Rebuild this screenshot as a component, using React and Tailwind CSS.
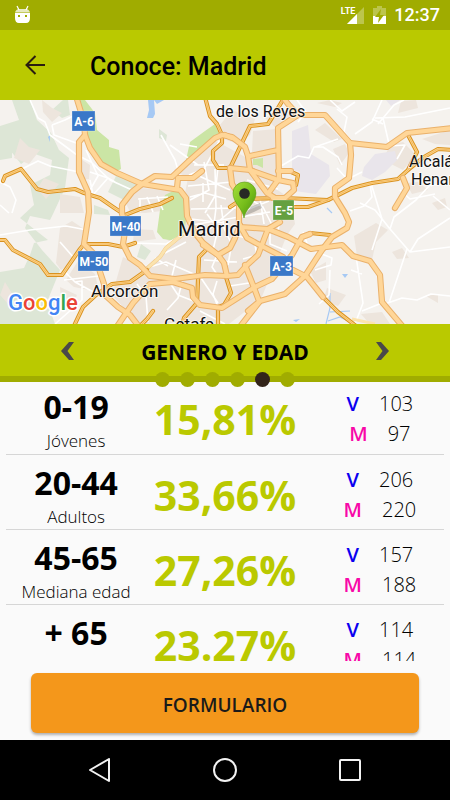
import React from "react";

const groups = [
  { range: "0-19", label: "Jóvenes", share: "15,81%", men: "103", women: "97" },
  { range: "20-44", label: "Adultos", share: "33,66%", men: "206", women: "220" },
  { range: "45-65", label: "Mediana edad", share: "27,26%", men: "157", women: "188" },
  { range: "+ 65", label: "Mayores", share: "23.27%", men: "114", women: "114" },
];

const pages = [0, 1, 2, 3, 4, 5];
const activePage = 4;

const highways = [
  "M76 -4L84 22L85 35L90 48L101 64L117 73L142 84L180 90L186 98L187 116L195 133L203 143L218 155L224 163L227 176",
  "M85 35L79 42L79 72L88 92L89 112L87 125L84 144L95 155L100 172L104 184L105 195L118 207L130 215L140 228",
  "M142 84L155 76L172 77L190 60L215 38L222 35L232 37L245 47L248 56L250 70L267 93L275 98",
  "M142 84L132 92L122 105L122 114L126 125L123 144L130 158L140 165L150 176L175 179L205 175L227 176L238 175L247 165L258 155L268 129L280 122",
  "M177 88L178 78L193 78L202 71",
  "M225 35L232 38",
  "M230 68L232 84L239 95L239 124L247 138L256 143L283 157",
  "M240 125L235 138L230 148L218 155L203 145",
  "M230 68L250 70L278 80L293 83L294 90L285 98L273 98",
  "M250 56L278 50M279 80L278 28L298 15L325 15L350 43L387 47L407 33L454 28",
  "M298 15L288 4L282 -4M278 80L270 91M278 71L291 71",
  "M350 43L351 55L349 78L335 88L335 97L345 113L349 122L347 128L332 137L322 150L305 176L285 194L260 201L239 228",
  "M240 127L268 129L288 137L311 149L342 145L353 156L370 161L380 175L382 202L404 228",
  "M310 134L302 137L292 155L272 179L255 187L222 208L200 205L193 197L192 188L173 182L150 184L133 203L116 228",
  "M245 165L253 185L259 201M260 201L248 211",
  "M276 166L293 170L307 177L323 197",
  "M403 78L407 88L395 108",
];

const roads = [
  "M3 81L5 76L21 69L37 89L48 92L75 89L84 93L100 98L113 107L125 115L140 109L160 104L172 98",
  "M-2 140L5 140L13 150L40 164L48 175L62 175L80 149L84 144L108 144L123 147L135 143",
  "M205 -3L210 16L217 24L222 35L222 43L213 51L213 60L218 68L231 68",
  "M231 66L240 47L250 26L268 24L275 13L284 -2",
  "M230 107L242 99L285 98L328 100L352 88L372 83L398 79L408 70L417 52L407 33",
  "M293 107L308 107L328 100M409 69L424 57L438 49L454 50",
  "M289 71L298 75L296 85M310 133L330 135",
  "M207 149L199 157L197 203L184 218L181 228M218 207L218 228",
  "M226 177L231 193L224 205L218 207",
  "M73 228L83 207L96 195L112 184L130 182L147 170",
  "M140 226L147 219L153 211M323 197L338 212L356 226",
];

const streets =
  "M30 0L38 18L45 22L50 35L77 55L91 62L110 80L132 90M52 25L65 20L75 15L84 22M52 25L54 35L79 44M22 69L38 61L50 66L79 72M0 82L10 87L16 100L12 113M0 105L9 113M90 80L93 95L108 78L115 82M90 72L108 78M86 50L98 76L90 90M0 135L30 130L66 126L87 130M60 142L74 158L64 171L75 182L82 181L82 200L72 209L55 224M64 180L99 176M75 182L97 194M130 143L166 144L184 134M155 158L168 166M140 170L166 162L196 175M183 178L178 198L167 210M170 183L178 195L196 202M176 160L171 180M186 142L165 153M137 184L146 196L148 222M161 35L175 60L180 77M170 45L198 65M180 44L197 47M194 65L224 65M220 40L204 69L189 75M204 62L209 90L190 100M218 67L215 96L205 113M199 76L230 90M188 86L232 82M190 97L205 93L226 99M191 109L238 108M203 83L203 102M215 69L216 108L214 124M192 125L239 117M205 133L239 104M207 114L218 129L213 150M221 105L224 128L232 145M191 119L224 123M138 99L168 97M140 98L140 112M147 97L153 112M157 96L163 110M243 95L263 107L273 127L262 143M247 83L242 102M255 71L257 83M247 80L278 89M260 98L264 124M270 112L240 117M244 111L269 101M217 155L212 167L218 176M204 160L237 162M231 148L228 165M238 136L254 140L257 155L243 159M270 128L270 144L287 151M230 186L249 183M217 181L213 194L218 207M201 178L218 203M200 211L225 224M295 104L280 119L277 136M303 132L309 149M297 0L306 12L298 22M330 0L342 11L355 2M337 9L347 17L344 32L354 44M355 34L372 22L382 0M375 18L405 17L450 8M404 0L394 5L378 24M383 24L372 19M383 18L389 44M281 66L298 56L309 58L314 47L323 47L338 57L342 65M315 47L338 39M337 68L347 79M370 84L372 97L364 106L350 111M374 47L405 45L397 59M360 103L375 110L390 129L410 152L450 147M407 149L389 203M410 152L418 139L450 118M390 129L394 117L416 100L430 85L450 84M433 96L450 110M370 80L382 119L372 150M356 156L363 203L355 224M351 170L362 174M309 149L332 158L331 165L315 170M330 170L329 195L319 204M382 205L402 198L417 200L431 194L450 196M362 211L382 203M400 90L410 99L435 94M420 78L432 86M340 83L362 72";

function MapView() {
  return (
    <svg
      className="block h-full w-full"
      viewBox="0 0 450 224"
      preserveAspectRatio="xMidYMid slice"
      role="img"
      aria-label="Mapa de Madrid"
    >
      <rect x="-400" y="-200" width="1250" height="624" fill="#f5f2ee" />
      <g fill="#dde6d6">
        <path d="M12 0H30L37 20L51 33L59 50L69 58L65 88L53 114L50 120L30 116L25 128L42 150L60 170L47 202L55 224H0V172L24 168L30 155L34 143L48 140L20 118L34 105L30 85L50 75L52 60L35 54L21 64L10 50L0 58V26L19 20Z" />
        <path d="M0 30L12 26L12 58L0 60ZM63 0L68 0L70 15L62 18L52 10ZM117 74L141 85L133 96L126 101L108 92ZM94 105L108 110L110 115L94 114ZM141 144L151 151L145 160L137 157ZM159 29L167 35L166 41L159 38ZM212 176L207 187L201 186Z" />
        <path d="M170 198L176 208L168 220L162 213ZM225 184L232 186L231 196Z" />
      </g>
      <g fill="#ede5dd">
        <path d="M20 38L29 47L40 50L29 64L14 58ZM42 0L52 8L62 13L52 22L43 12ZM44 78L59 84L46 99L37 89ZM60 128L72 121L87 131L75 160L61 170L56 163ZM60 94L80 97L84 113H60ZM78 161L95 174L99 192L74 187L66 180ZM76 56L90 65L89 79L80 80ZM110 128L122 128L124 137L110 136ZM5 182L13 195L8 204L0 195ZM60 187L77 195L73 205L61 201Z" />
        <path d="M189 62L216 41L247 58L276 54L276 89L291 99L295 124L287 135L261 199L229 224H139L112 195L123 157L145 168L171 143L158 132L161 117L184 98L188 78L174 70Z" />
        <path d="M212 35L232 10L255 19L250 35L238 44ZM253 31L276 29L275 50L252 52ZM265 18L280 10L300 15L277 29ZM124 99L141 88L177 91L170 110L145 113L130 112ZM134 129L153 130L156 139L133 142Z" />
        <path d="M315 30L325 23L342 39L334 42ZM333 49L345 44L349 53L340 65ZM317 3L330 0L342 3L335 7ZM299 57L310 52L309 57L300 62ZM354 136L376 123L388 130L376 142L372 160L357 156ZM327 188L346 195L338 206L323 201ZM392 152L402 148L409 158L397 159ZM383 60L390 45L403 42L416 55L403 70ZM422 39L450 30V45L435 44ZM401 1L416 0L418 8L398 13ZM432 103L445 98L447 107L438 110ZM426 196L438 194L438 203ZM361 214L382 212L390 224H370ZM310 171L326 162L326 180L316 183ZM406 83L418 82L428 90L412 94Z" />
      </g>
      <path fill="#e9e5eb" d="M292 31L308 25L311 54L329 65L330 76L316 94L295 91L300 72L292 70ZM364 67L375 54L395 51L397 60L385 72L372 80L362 76ZM386 0L391 6L400 0ZM250 202L258 203L247 214Z" />
      <g fill="#cbe5a5">
        <path d="M79 0H85L95 13L97 30L109 40L109 47L119 50L121 69L115 72L102 64L91 47L86 35Z" />
        <path d="M186 60L190 42L205 31L215 24L220 36L207 45L195 55Z" />
        <path d="M165 95L177 89L184 97L187 114L184 133L176 141L163 139L157 132L160 110ZM253 59L263 58L263 68L257 65L253 65Z" />
      </g>
      <path fill="#a6c9f4" d="M148 0H154L155 14L153 18H147L149 10ZM154 0H164L157 4ZM48 37L50 35V42ZM342 174H348L345 178ZM293 220L300 219L296 222Z" />
      <path fill="none" stroke="#a6c9f4" strokeWidth="1.2" d="M330 193V208L326 224M330 212L350 211M328 221L340 217L352 223M327 108L332 113" />
      <path fill="none" stroke="#ffffff" strokeWidth="1.6" strokeLinejoin="round" d={streets} />
      <path fill="none" stroke="#f2c987" strokeWidth="4" d="M183 134L166 148L160 157L143 172" />
      <path fill="none" stroke="#fbe3ae" strokeWidth="3" d="M183 134L166 148L160 157L143 172M352 219L375 224" />
      <g fill="none" strokeLinejoin="round" strokeLinecap="round">
        <g stroke="#da9220" strokeWidth="4.2">
          {roads.map((d) => <path key={d} d={d} />)}
        </g>
        <g stroke="#ffd88f" strokeWidth="2.2">
          {roads.map((d) => <path key={d} d={d} />)}
        </g>
        <g stroke="#e7a544" strokeWidth="0.6">
          {roads.map((d) => <path key={d} d={d} />)}
        </g>
        <g stroke="#eab16b" strokeWidth="6.2">
          {highways.map((d) => <path key={d} d={d} />)}
        </g>
        <g stroke="#ffd698" strokeWidth="4.2">
          {highways.map((d) => <path key={d} d={d} />)}
        </g>
      </g>

      <g fontFamily="Roboto, sans-serif" fontWeight="700" fontSize="12" fill="#fff" textAnchor="middle">
        <g stroke="#ffffff" strokeOpacity="0.5" strokeWidth="0.5">
          <rect x="72" y="11" width="23" height="20" fill="#3a78c8" />
          <rect x="110" y="116" width="31" height="20" fill="#3a78c8" />
          <rect x="78" y="151" width="31" height="20" fill="#3a78c8" />
          <rect x="270" y="156" width="23" height="20" fill="#3a78c8" />
          <rect x="273" y="100" width="21" height="20" fill="#65a040" />
        </g>
        <text x="84" y="26">A-6</text>
        <text x="126" y="131">M-40</text>
        <text x="94" y="166">M-50</text>
        <text x="282" y="171">A-3</text>
        <text x="284" y="115">E-5</text>
      </g>
      <g
        fontFamily="Roboto, sans-serif"
        fill="#111"
        stroke="#fff"
        strokeWidth="2"
        strokeOpacity="0.7"
        paintOrder="stroke"
        strokeLinejoin="round"
      >
        <text x="216" y="17" fontSize="16">de los Reyes</text>
        <text x="178" y="136" fontSize="20">Madrid</text>
        <text x="91" y="197" fontSize="17">Alcorcón</text>
        <text x="409" y="67" fontSize="16">Alcalá de</text>
        <text x="411" y="85" fontSize="16">Henares</text>
        <text x="164" y="230" fontSize="17">Getafe</text>
      </g>
      <path fill="#000" fillOpacity="0.2" d="M244 116L251 107L260 103L262 108L254 112Z" />
      <defs>
        <linearGradient id="pin" x1="0" y1="0" x2="1" y2="1">
          <stop offset="0" stopColor="#a4e03c" />
          <stop offset="0.55" stopColor="#76bd1b" />
          <stop offset="1" stopColor="#458d0c" />
        </linearGradient>
      </defs>
      <path fill="url(#pin)" stroke="#5b9c18" strokeWidth="0.6" d="M244 118C243 109 233 103 233 93A11.500 11 0 0 1 256 93C256 103 245 109 244 118Z" />
      <circle cx="244.500" cy="93.500" r="5.300" fill="#272a25" />
      <text
        x="8"
        y="210"
        fontFamily="Roboto, sans-serif"
        fontWeight="500"
        fontSize="22"
        stroke="#fff"
        strokeWidth="3"
        paintOrder="stroke"
        strokeLinejoin="round"
      >
        <tspan fill="#4285f4">G</tspan>
        <tspan fill="#ea4335">o</tspan>
        <tspan fill="#fbbc05">o</tspan>
        <tspan fill="#4285f4">g</tspan>
        <tspan fill="#34a853">l</tspan>
        <tspan fill="#ea4335">e</tspan>
      </text>
    </svg>
  );
}

function StatusBar() {
  return (
    <div className="flex h-[30px] shrink-0 items-center bg-[#a0ac00] pr-2.5 pl-3.5 text-white">
      <svg width="17" height="20" viewBox="0 0 17 20" fill="#fff" aria-hidden="true">
        <path d="M3 1L5 5M14 1L12 5" stroke="#fff" strokeWidth="1.200" />
        <path d="M1 7.500Q2 4 5 4H12Q15 4 16 7.500Z" fillOpacity="0.75" />
        <path fillRule="evenodd" d="M1 8H16V13Q16 18 12 18H5Q1 18 1 13ZM4 10V12H6V10ZM11 10V12H13V10Z" />
      </svg>
      <div className="ml-auto flex items-center">
        <span className="mb-2 font-[Roboto,sans-serif] text-[9px] leading-none font-bold">LTE</span>
        <svg className="-ml-2" width="18" height="20" viewBox="0 0 18 20" aria-hidden="true">
          <path d="M17 2V19H0Z" fill="#fff" fillOpacity="0.3" />
          <path d="M10 9V19H0Z" fill="#fff" />
        </svg>
        <svg className="ml-2" width="13" height="20" viewBox="0 0 13 20" aria-hidden="true">
          <path d="M0 3H4V1H9V3H13V19H0Z" fill="#fff" fillOpacity="0.3" />
          <path d="M0 11H13V19H0Z" fill="#fff" />
          <path d="M8 4L2 12H6L5 18L11 10H7Z" fill="#a0ac00" />
        </svg>
        <span className="ml-2 font-[Roboto,sans-serif] text-lg leading-none font-medium">12:37</span>
      </div>
    </div>
  );
}

export default function App() {
  return (
    <div className="flex h-screen flex-col bg-[#fafafa] font-['Open_Sans',sans-serif] text-black">
      <StatusBar />

      <header className="flex h-[70px] shrink-0 items-center bg-[#bac900] px-6">
        <button type="button" aria-label="Volver" className="mr-11">
          <svg width="22" height="22" viewBox="0 0 22 22" fill="none" stroke="#2a1d10" strokeWidth="2" aria-hidden="true">
            <path d="M21 11H3M11.500 2L2.500 11L11.500 20" />
          </svg>
        </button>
        <h1 className="pt-1 font-[Roboto,sans-serif] text-[25px] leading-8 font-medium">Conoce: Madrid</h1>
      </header>

      <div className="h-56 shrink-0 overflow-hidden">
        <MapView />
      </div>

      <section className="relative z-10 shrink-0 border-b-[6px] border-[#a0ac00] bg-[#bac900]">
        <div className="flex h-13 items-center justify-between px-15">
          <button type="button" aria-label="Anterior" className="pt-0.5">
            <svg width="15" height="20" viewBox="0 0 15 20" fill="#494949" aria-hidden="true">
              <path d="M9 1H14L7.500 10L14 19H9L1 10Z" />
            </svg>
          </button>
          <h2 className="pt-1 text-[21px] leading-7 font-bold">GENERO Y EDAD</h2>
          <button type="button" aria-label="Siguiente" className="pt-0.5">
            <svg width="15" height="20" viewBox="0 0 15 20" fill="#494949" aria-hidden="true">
              <path d="M6 1H1L7.500 10L1 19H6L14 10Z" />
            </svg>
          </button>
        </div>
        <div className="absolute inset-x-0 -bottom-[11px] flex justify-center gap-2.5">
          {pages.map((page) => (
            <span
              key={page}
              className={
                page === activePage
                  ? "size-[15px] rounded-full bg-[#33241a]"
                  : "size-[15px] rounded-full bg-[#a0ac00]"
              }
            />
          ))}
        </div>
      </section>

      <div className="-mt-[3px] min-h-0 flex-1 overflow-y-auto px-1.5 [scrollbar-width:none]">
        <table className="w-full table-fixed border-collapse text-center">
          <tbody>
            {groups.map((group) => (
              <tr key={group.range} className="h-[75px] border-b border-[#d6d6d6] align-top">
                <th scope="row" className="w-[32%] p-0 font-normal">
                  <div className="pt-1.5 text-[32px] leading-11 font-bold">{group.range}</div>
                  <div className="text-[17px] leading-6 font-light">{group.label}</div>
                </th>
                <td className="w-[36%] p-0 pt-2.5 text-[41px] leading-[60px] font-bold text-[#bac900]">
                  {group.share}
                </td>
                <td className="p-0 pt-2.5 pl-3 text-xl leading-[30px] font-light">
                  <div className="flex justify-center gap-5">
                    <span className="font-semibold text-[#0b00f0]">V</span>
                    <span>{group.men}</span>
                  </div>
                  <div className="flex justify-center gap-5">
                    <span className="font-semibold text-[#f808a8]">M</span>
                    <span>{group.women}</span>
                  </div>
                </td>
              </tr>
            ))}
          </tbody>
        </table>
      </div>

      <div className="shrink-0 px-[31px] pt-3 pb-[7px]">
        <button
          type="button"
          className="h-15 w-full rounded-md bg-[#f4971b] pt-1 text-[19px] font-semibold text-[#1a1a1a] shadow-[0_2px_3px_rgba(0,0,0,0.3)]"
        >
          FORMULARIO
        </button>
      </div>

      <nav className="flex h-15 shrink-0 items-center justify-center gap-[101px] bg-black">
        <button type="button" aria-label="Atrás">
          <svg width="24" height="24" viewBox="0 0 24 24" fill="none" stroke="#f2f2f2" strokeWidth="2" strokeLinejoin="round" aria-hidden="true">
            <path d="M21 1V23L2 12Z" />
          </svg>
        </button>
        <button type="button" aria-label="Inicio">
          <svg width="24" height="24" viewBox="0 0 24 24" fill="none" stroke="#f2f2f2" strokeWidth="2" aria-hidden="true">
            <circle cx="12" cy="12" r="11" />
          </svg>
        </button>
        <button type="button" aria-label="Recientes">
          <svg width="24" height="24" viewBox="0 0 24 24" fill="none" stroke="#f2f2f2" strokeWidth="2" aria-hidden="true">
            <rect x="2" y="2" width="20" height="20" rx="1" />
          </svg>
        </button>
      </nav>
    </div>
  );
}
